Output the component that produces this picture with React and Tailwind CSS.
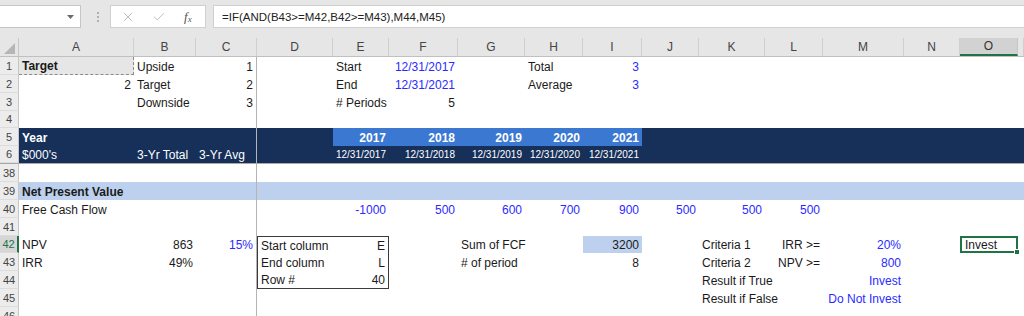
import { X, Check } from 'lucide-react';

const COLS = ['A', 'B', 'C', 'D', 'E', 'F', 'G', 'H', 'I', 'J', 'K', 'L', 'M', 'N', 'O', 'P'];
const W = {
  A: 'w-[115px]', B: 'w-[62px]', C: 'w-[61px]', D: 'w-[76px]', E: 'w-[56px]', F: 'w-[69px]',
  G: 'w-[67px]', H: 'w-[58px]', I: 'w-[59px]', J: 'w-[57px]', K: 'w-[66px]', L: 'w-[58px]',
  M: 'w-[81px]', N: 'w-[56px]', O: 'w-[58px]', P: 'w-[6px]',
};

const BLUE = 'text-[#2a2aff]';
const BOX = 'border-[#3a3a3a]';

// r = right aligned, b = bold, blue = input colour
const ROWS = [
  { n: '1', h: 'h-[18px]', cells: {
    A: { t: 'Target', b: true, cls: 'bg-[#e6e6e6] border-r border-b border-dashed border-[#8c8c8c]' },
    B: { t: 'Upside' }, C: { t: '1', r: true },
    E: { t: 'Start' }, F: { t: '12/31/2017', r: true, blue: true },
    H: { t: 'Total' }, I: { t: '3', r: true, blue: true },
  } },
  { n: '2', h: 'h-[18px]', cells: {
    A: { t: '2', r: true }, B: { t: 'Target' }, C: { t: '2', r: true },
    E: { t: 'End' }, F: { t: '12/31/2021', r: true, blue: true },
    H: { t: 'Average' }, I: { t: '3', r: true, blue: true },
  } },
  { n: '3', h: 'h-[18px]', cells: {
    B: { t: 'Downside' }, C: { t: '3', r: true },
    E: { t: '# Periods' }, F: { t: '5', r: true },
  } },
  { n: '4', h: 'h-[17px]', cells: {} },
  { n: '5', h: 'h-[18px]', navy: true, cells: {
    A: { t: 'Year', b: true },
    E: { t: '2017', r: true, b: true, cls: 'bg-[#3a78d2]' },
    F: { t: '2018', r: true, b: true, cls: 'bg-[#3a78d2]' },
    G: { t: '2019', r: true, b: true, cls: 'bg-[#3a78d2]' },
    H: { t: '2020', r: true, b: true, cls: 'bg-[#3a78d2]' },
    I: { t: '2021', r: true, b: true, cls: 'bg-[#3a78d2]' },
  } },
  { n: '6', h: 'h-[18px]', navy: true, freeze: true, cells: {
    A: { t: "$000's" }, B: { t: '3-Yr Total' }, C: { t: '3-Yr Avg' },
    E: { t: '12/31/2017', r: true, sm: true }, F: { t: '12/31/2018', r: true, sm: true },
    G: { t: '12/31/2019', r: true, sm: true }, H: { t: '12/31/2020', r: true, sm: true },
    I: { t: '12/31/2021', r: true, sm: true },
  } },
  { n: '38', h: 'h-[18px]', cells: {} },
  { n: '39', h: 'h-[18px]', band: true, cells: { A: { t: 'Net Present Value', b: true } } },
  { n: '40', h: 'h-[18px]', cells: {
    A: { t: 'Free Cash Flow' },
    E: { t: '-1000', r: true, blue: true }, F: { t: '500', r: true, blue: true },
    G: { t: '600', r: true, blue: true }, H: { t: '700', r: true, blue: true },
    I: { t: '900', r: true, blue: true }, J: { t: '500', r: true, blue: true },
    K: { t: '500', r: true, blue: true }, L: { t: '500', r: true, blue: true },
  } },
  { n: '41', h: 'h-[18px]', cells: {} },
  { n: '42', h: 'h-[17px]', sel: true, cells: {
    A: { t: 'NPV' }, B: { t: '863', r: true }, C: { t: '15%', r: true, blue: true },
    D: { t: 'Start column', cls: `border-t border-l ${BOX}` },
    E: { t: 'E', r: true, cls: `border-t border-r ${BOX}` },
    G: { t: 'Sum of FCF' },
    I: { t: '3200', r: true, cls: 'bg-[#bdd1ee]' },
    K: { t: 'Criteria 1' }, L: { t: 'IRR >=', r: true }, M: { t: '20%', r: true, blue: true },
    O: { t: 'Invest', active: true },
  } },
  { n: '43', h: 'h-[18px]', cells: {
    A: { t: 'IRR' }, B: { t: '49%', r: true },
    D: { t: 'End column', cls: `border-l ${BOX}` },
    E: { t: 'L', r: true, cls: `border-r ${BOX}` },
    G: { t: '# of period' }, I: { t: '8', r: true },
    K: { t: 'Criteria 2' }, L: { t: 'NPV >=', r: true }, M: { t: '800', r: true, blue: true },
  } },
  { n: '44', h: 'h-[18px]', cells: {
    D: { t: 'Row #', cls: `border-l border-b ${BOX}` },
    E: { t: '40', r: true, cls: `border-r border-b ${BOX}` },
    K: { t: 'Result if True' }, M: { t: 'Invest', r: true, blue: true },
  } },
  { n: '45', h: 'h-[18px]', cells: {
    K: { t: 'Result if False' }, M: { t: 'Do Not Invest', r: true, blue: true },
  } },
  { n: '46', h: 'h-[18px]', cells: {} },
];

function FormulaBar() {
  return (
    <div className="h-[38px] bg-[#e6e6e6] flex items-start pt-[5px] gap-0">
      <div className="w-[81px] h-[23px] bg-white border border-l-0 border-[#c6c6c6] flex items-center justify-end pr-[6px]">
        <svg width="7" height="4" viewBox="0 0 7 4"><polygon points="0,0 7,0 3.5,4" fill="#6a6a6a" /></svg>
      </div>
      <div className="w-[29px] h-[23px] flex flex-col items-center justify-center gap-[2px] pl-[4px]">
        <span className="w-[2px] h-[2px] bg-[#b0b0b0]" />
        <span className="w-[2px] h-[2px] bg-[#b0b0b0]" />
        <span className="w-[2px] h-[2px] bg-[#b0b0b0]" />
      </div>
      <div className="w-[96px] h-[23px] bg-white border border-[#d0d0d0] flex items-center">
        <X size={14} strokeWidth={1.3} className="text-[#a8a8a8] ml-[10px]" />
        <Check size={14} strokeWidth={1.3} className="text-[#a8a8a8] ml-[17px]" />
        <span className="ml-[18px] text-[13px] italic text-[#555] font-['Liberation_Serif',serif] leading-none">
          f<span className="text-[9px] relative top-[1px]">x</span>
        </span>
      </div>
      <div className="ml-[7px] flex-1 h-[23px] bg-white border border-r-0 border-[#d0d0d0] flex items-center pl-[8px] text-[11.5px] text-[#222]">
        =IF(AND(B43&gt;=M42,B42&gt;=M43),M44,M45)
      </div>
    </div>
  );
}

function ColumnHeaders() {
  return (
    <div className="flex h-[19px] bg-[#e6e6e6] border-b border-[#c0c0c0] text-[12px] text-[#444]">
      <div className="w-[19px] h-full border-r border-[#c6c6c6] flex items-end justify-end pr-[3px] pb-[2px]">
        <svg width="11" height="11" viewBox="0 0 11 11"><polygon points="11,0 11,11 0,11" fill="#b6b6b6" /></svg>
      </div>
      {COLS.map((c) => (
        <div
          key={c}
          className={`${W[c]} h-full flex items-center justify-center border-r ${
            c === 'O' ? 'bg-[#d2d2d2] border-b-2 border-b-[#217346] border-r-[#c6c6c6] text-[#333]' : 'border-[#cfcfcf]'
          }`}
        >
          {c === 'P' ? '' : c}
        </div>
      ))}
    </div>
  );
}

function Cell({ col, spec, navy }) {
  const base = `${W[col]} h-full shrink-0 flex items-center whitespace-nowrap px-[3px] pt-[1px]`;
  const freeze = col === 'C' ? 'border-r border-[#b4b4b4]' : '';
  if (!spec) return <div className={`${base} ${freeze}`} />;
  const color = navy ? 'text-white' : spec.blue ? BLUE : 'text-[#1a1a1a]';
  return (
    <div
      className={`${base} ${freeze} ${spec.r ? 'justify-end' : 'justify-start'} ${spec.b ? 'font-bold' : ''} ${
        spec.sm ? 'text-[10px]' : ''
      } ${color} ${spec.cls || ''} ${spec.active ? 'relative border-2 border-[#217346] px-[2px]' : ''}`}
    >
      {spec.t}
      {spec.active && (
        <span className="absolute -right-[4px] -bottom-[4px] w-[6px] h-[6px] bg-[#217346] border border-white" />
      )}
    </div>
  );
}

function Row({ row }) {
  const fill = row.navy ? 'bg-[#16305a]' : row.band ? 'bg-[#bdd1ee]' : 'bg-white';
  return (
    <div className={`flex ${row.h} ${row.freeze ? 'border-b border-[#a8a8a8]' : ''}`}>
      <div
        className={`w-[19px] h-full shrink-0 flex items-center justify-center text-[11px] border-b border-[#dcdcdc] ${
          row.sel
            ? 'bg-[#d6d6d6] text-[#217346] border-r-2 border-r-[#217346]'
            : 'bg-[#ececec] text-[#444] border-r border-r-[#c6c6c6]'
        }`}
      >
        {row.n}
      </div>
      <div className={`flex flex-1 h-full ${fill}`}>
        {COLS.map((c) => (
          <Cell key={c} col={c} spec={row.cells[c]} navy={row.navy} />
        ))}
      </div>
    </div>
  );
}

export default function App() {
  return (
    <div className="w-[1024px] h-[316px] overflow-hidden bg-white font-['Liberation_Sans',Arial,sans-serif] text-[12px] leading-[14px]">
      <FormulaBar />
      <ColumnHeaders />
      {ROWS.map((r) => (
        <Row key={r.n} row={r} />
      ))}
    </div>
  );
}
